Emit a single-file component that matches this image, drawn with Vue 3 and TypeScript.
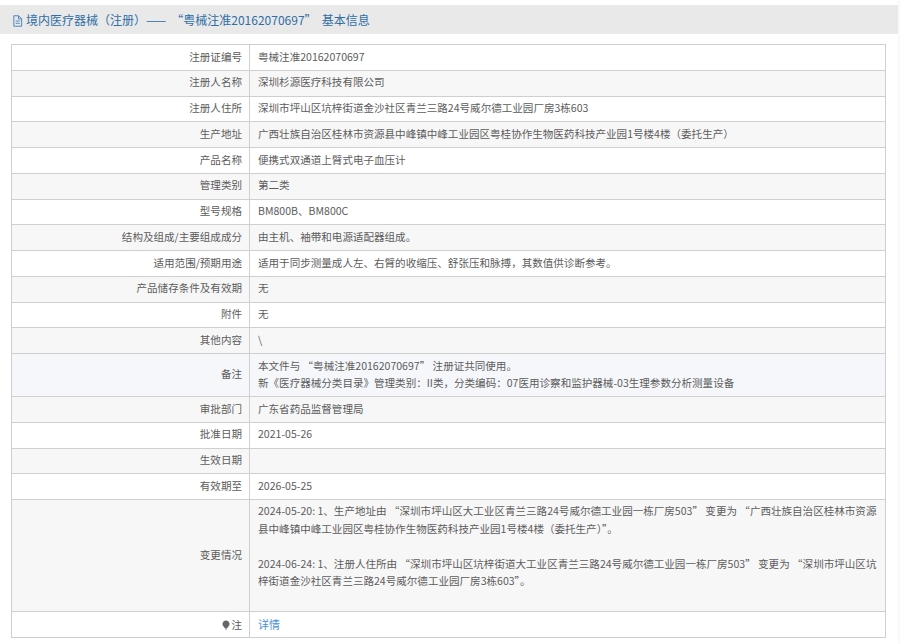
<script setup lang="ts">
interface Row {
  label: string
  lines: string[]
  hover?: boolean
}

const rows: Row[] = [
  { label: '注册证编号', lines: ['粤械注准20162070697'] },
  { label: '注册人名称', lines: ['深圳杉源医疗科技有限公司'] },
  { label: '注册人住所', lines: ['深圳市坪山区坑梓街道金沙社区青兰三路24号威尔德工业园厂房3栋603'] },
  { label: '生产地址', lines: ['广西壮族自治区桂林市资源县中峰镇中峰工业园区粤桂协作生物医药科技产业园1号楼4楼（委托生产）'] },
  { label: '产品名称', lines: ['便携式双通道上臂式电子血压计'] },
  { label: '管理类别', lines: ['第二类'] },
  { label: '型号规格', lines: ['BM800B、BM800C'] },
  { label: '结构及组成/主要组成成分', lines: ['由主机、袖带和电源适配器组成。'] },
  { label: '适用范围/预期用途', lines: ['适用于同步测量成人左、右臂的收缩压、舒张压和脉搏，其数值供诊断参考。'] },
  { label: '产品储存条件及有效期', lines: ['无'] },
  { label: '附件', lines: ['无'] },
  { label: '其他内容', lines: ['\\'] },
  {
    label: '备注',
    hover: true,
    lines: [
      '本文件与 “粤械注准20162070697” 注册证共同使用。',
      '新《医疗器械分类目录》管理类别：II类，分类编码：07医用诊察和监护器械-03生理参数分析测量设备',
    ],
  },
  { label: '审批部门', lines: ['广东省药品监督管理局'] },
  { label: '批准日期', lines: ['2021-05-26'] },
  { label: '生效日期', lines: [] },
  { label: '有效期至', lines: ['2026-05-25'] },
]

const changes = [
  '2024-05-20: 1、生产地址由 “深圳市坪山区大工业区青兰三路24号威尔德工业园一栋厂房503” 变更为 “广西壮族自治区桂林市资源县中峰镇中峰工业园区粤桂协作生物医药科技产业园1号楼4楼（委托生产）”。',
  '2024-06-24: 1、注册人住所由 “深圳市坪山区坑梓街道大工业区青兰三路24号威尔德工业园一栋厂房503” 变更为 “深圳市坪山区坑梓街道金沙社区青兰三路24号威尔德工业园厂房3栋603”。',
]
</script>

<template>
  <div class="page">
    <h3 class="title">
      <svg class="doc-icon" viewBox="0 0 12 13" width="11" height="12">
        <path d="M2 .8h5.200L10.500 4v8.200H2z M7 1v3.200h3.400 M4 6.500h4.500 M4 9h4.500" fill="none" stroke="#3f7fb8" stroke-width="1" />
      </svg>境内医疗器械（注册）—— “粤械注准20162070697” 基本信息
    </h3>

    <table class="info">
      <tbody>
        <tr v-for="row in rows" :key="row.label" :class="{ hover: row.hover }">
          <th>{{ row.label }}</th>
          <td>
            <div v-for="line in row.lines" :key="line">{{ line }}</div>
          </td>
        </tr>
        <tr class="change-row">
          <th>变更情况</th>
          <td>
            <div class="change" v-for="c in changes" :key="c">{{ c }}</div>
          </td>
        </tr>
        <tr class="last-row">
          <th>
            <svg class="bulb" viewBox="0 0 10 12" width="8" height="10">
              <path d="M5 .5a4.300 4.300 0 0 1 2.400 7.900L6.500 10h-3l-.9-1.600A4.300 4.300 0 0 1 5 .5z" fill="#666" />
              <path d="M3.800 11h2.400" stroke="#666" />
            </svg>注
          </th>
          <td><a class="detail" href="#">详情</a></td>
        </tr>
      </tbody>
    </table>
  </div>
</template>

<style>
html,
body {
  margin: 0;
  background: #fff;
}
</style>

<style scoped>
.page {
  width: 898px;
  height: 644px;
  overflow: hidden;
  box-sizing: border-box;
  padding-top: 5px;
  box-shadow: 0 0 4px rgba(0, 0, 0, 0.08);
  font-family: "Noto Sans CJK SC", "Liberation Sans", sans-serif;
}

.title {
  margin: 0 0 10px;
  height: 29px;
  line-height: 30px;
  padding-left: 12px;
  background: #e9e9e9;
  color: #2f6ea5;
  font-size: 12px;
  font-weight: 400;
  word-spacing: 2.5px;
}

.doc-icon {
  margin-right: 3px;
  vertical-align: -2px;
}

.info {
  margin-left: 11px;
  width: 875px;
  table-layout: fixed;
  border-collapse: collapse;
  font-size: 10.55px;
  color: #5c5c5c;
}

.info tr {
  height: 25.76px;
}

.info th,
.info td {
  box-sizing: border-box;
  border: 1px solid #cfcfcf;
  padding: 0 8px 2px;
  line-height: 17.5px;
  font-weight: 400;
  text-align: left;
}

.info th {
  width: 238px;
  text-align: right;
  padding: 0 7px 2px 0;
}

.info tr:nth-child(even) {
  background: #f7f7f7;
}

.info tr.hover {
  background: #f5f7fa;
}

.info tr.hover td {
  padding-top: 2.5px;
  padding-bottom: 4.5px;
}

.change-row td {
  height: 112px;
  vertical-align: top;
  padding-top: 2px;
}

.change {
  margin-bottom: 17.5px;
}

.change:last-child {
  margin-bottom: 0;
}

.last-row th,
.last-row td {
  padding-bottom: 0;
}

.bulb {
  margin-right: 1px;
  vertical-align: -1px;
}

.detail {
  color: #4a90d9;
  font-size: 11px;
  text-decoration: none;
}
</style>
